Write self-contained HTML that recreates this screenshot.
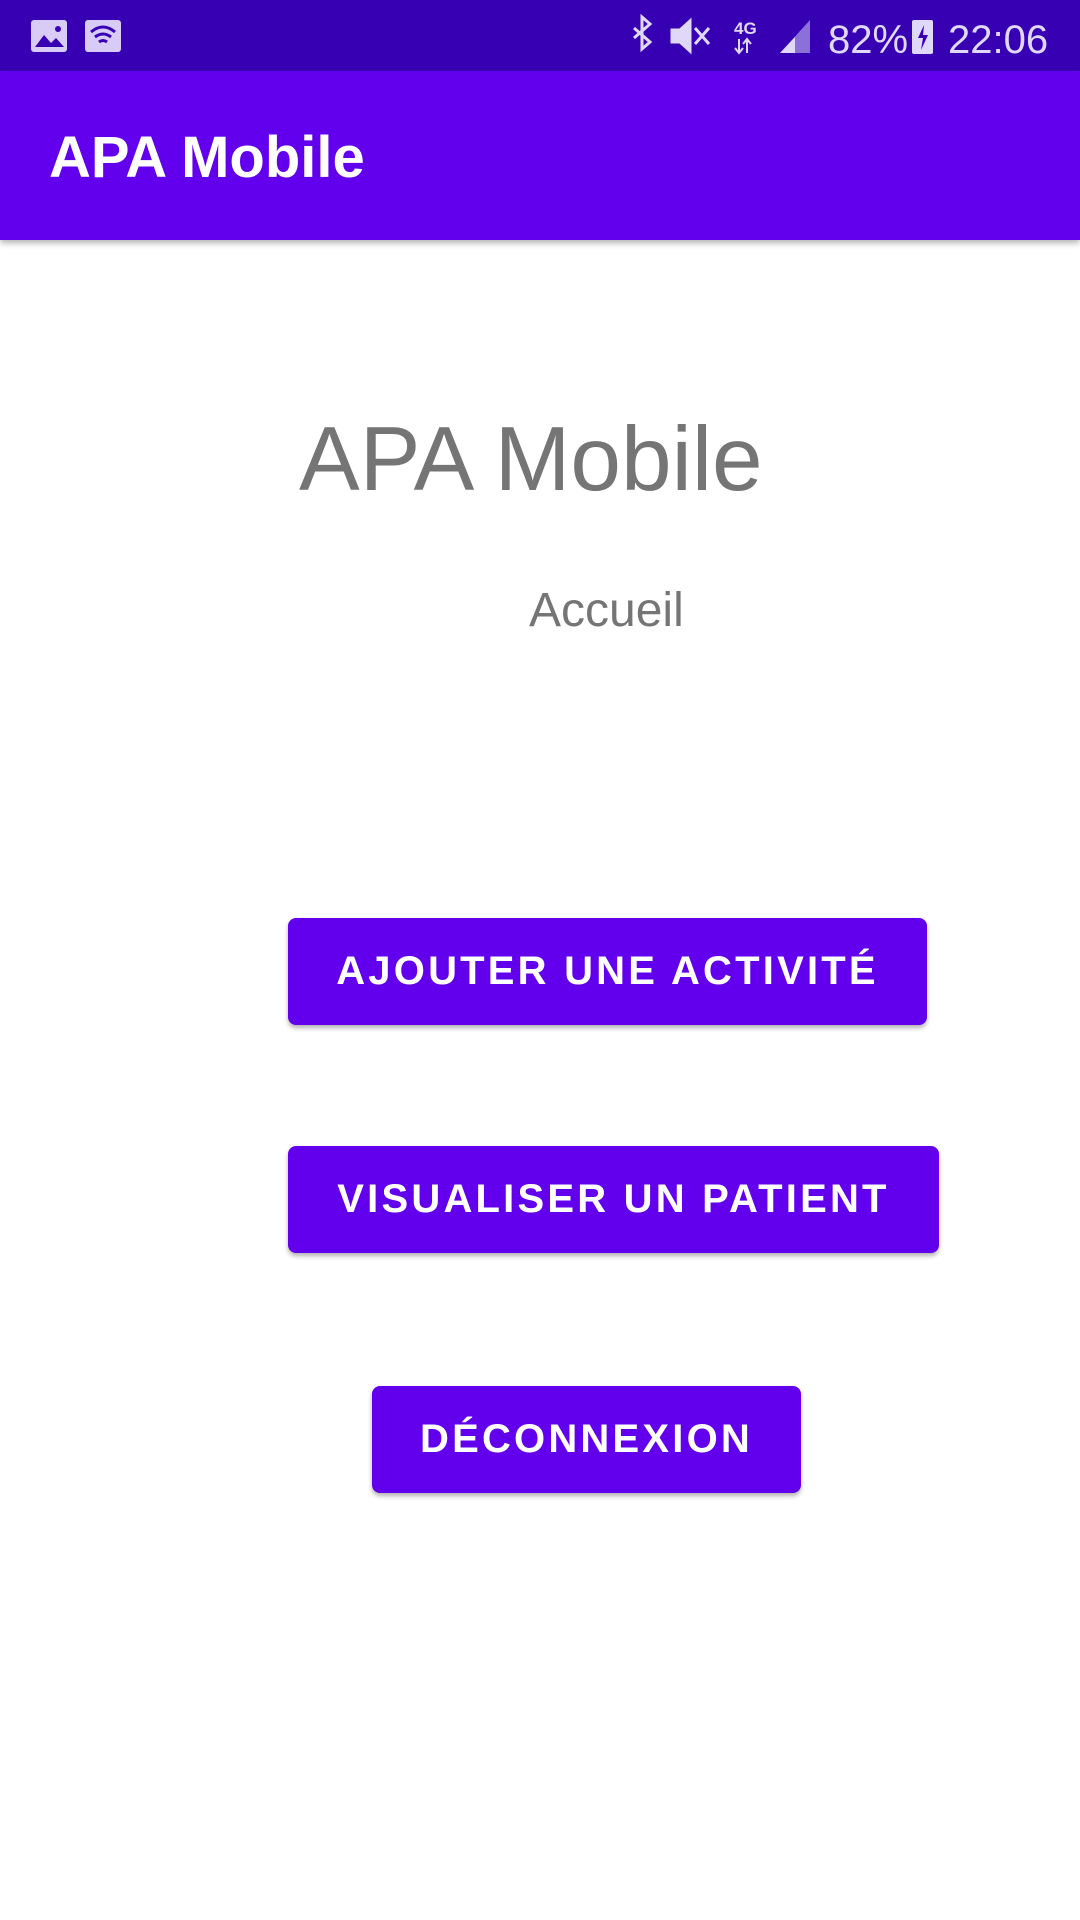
<!DOCTYPE html>
<html><head><meta charset="utf-8"><style>
*{margin:0;padding:0;box-sizing:border-box}
body{width:1080px;height:1920px;background:#fff;font-family:"Liberation Sans",sans-serif;position:relative;overflow:hidden}
.sb{position:absolute;top:0;left:0;width:1080px;height:71px;background:#3700B3;color:#e0d8f8}
.ab{position:absolute;top:71px;left:0;width:1080px;height:169px;background:#6200EE;box-shadow:0 3px 6px rgba(0,0,0,.3)}
.ab span{position:absolute;left:49px;top:53px;font-size:58px;color:#fff;font-weight:bold}
.t{position:absolute;color:#757575;white-space:nowrap}
.btn{position:absolute;background:#6200EE;color:#fff;border-radius:8px;box-shadow:0 3px 5px rgba(0,0,0,.3);font-size:40px;font-weight:bold;letter-spacing:3.2px;display:flex;align-items:center;justify-content:center;height:107px}
</style></head><body>
<div class="sb">
<svg width="1080" height="71" style="position:absolute;left:0;top:0">
<rect x="31" y="20" width="36" height="32" rx="3" fill="#d8ccf6"/><path d="M35 47l9-12 7 8 5-5 8 9z" fill="#3700B3"/><circle cx="58" cy="29" r="3" fill="#3700B3"/>
<rect x="85" y="20" width="36" height="32" rx="3" fill="#d8ccf6"/><path d="M91 32q12-10 24 0M95 37q8-6 16 0M99 42q4-3 8 0" stroke="#3700B3" stroke-width="3" fill="none"/>
<path d="M634 28l16 14-8 7V17l8 7-16 14" stroke="#e0d8f8" stroke-width="3" fill="none"/>
<path d="M672 30h8l10-9v30l-10-9h-8z M695 28l14 16M709 28l-14 16" stroke="#e0d8f8" stroke-width="3" fill="#e0d8f8"/>
<text x="734" y="34" font-size="17" fill="#e0d8f8" font-family="Liberation Sans" font-weight="bold">4G</text>
<path d="M739 39v14M735 48l4 5 4-5M747 53V39M743 44l4-5 4 5" stroke="#e0d8f8" stroke-width="2" fill="none"/>
<path d="M780 53L810 20v33z" fill="#8a70d8"/><path d="M780 53l15-16v16z" fill="#e0d8f8"/>
<text x="828" y="53" font-size="40" fill="#e0d8f8" font-family="Liberation Sans">82%</text>
<rect x="912" y="20" width="21" height="34" rx="2" fill="#e0d8f8"/><path d="M924 25l-6 13h5l-2 12 7-15h-5z" fill="#3700B3"/>
<text x="948" y="53" font-size="40" fill="#e0d8f8" font-family="Liberation Sans">22:06</text>
</svg>
</div>
<div class="ab"><span>APA Mobile</span></div>
<div class="t" style="left:299px;top:408px;font-size:91px">APA Mobile</div>
<div class="t" style="left:529px;top:583px;font-size:48px">Accueil</div>
<div class="btn" style="left:288px;top:918px;width:639px">AJOUTER UNE ACTIVITÉ</div>
<div class="btn" style="left:288px;top:1146px;width:651px">VISUALISER UN PATIENT</div>
<div class="btn" style="left:372px;top:1386px;width:429px">DÉCONNEXION</div>
</body></html>
